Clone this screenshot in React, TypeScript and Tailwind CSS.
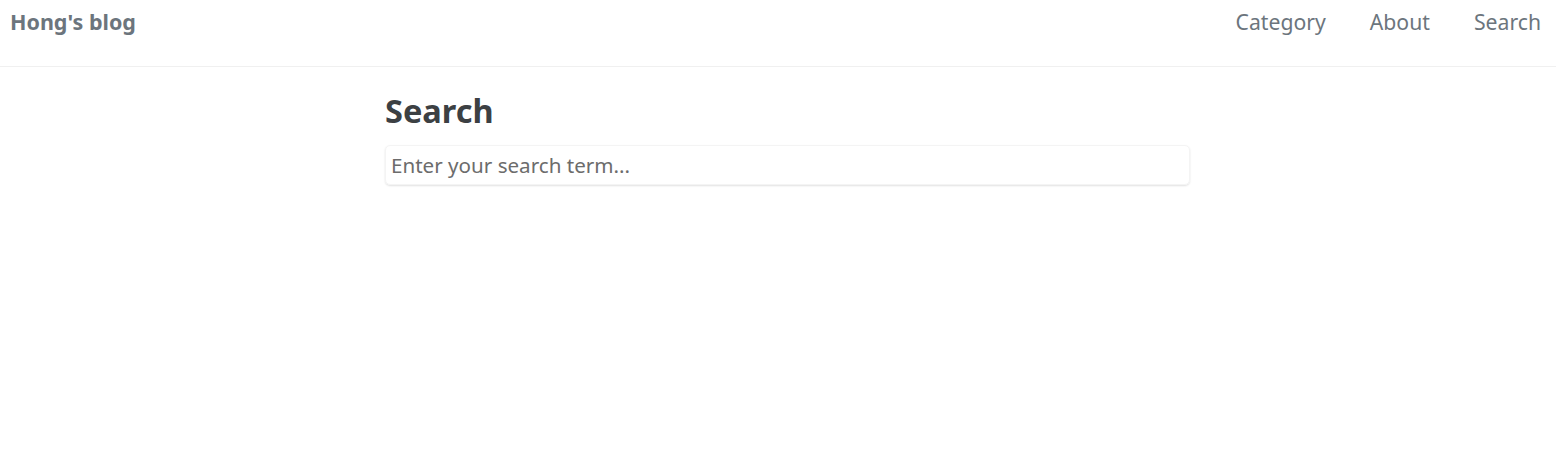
import React from 'react';

export default function App() {
  return (
    <div className="min-h-[467px] bg-white" style={{ fontFamily: '"Noto Sans", "Open Sans", sans-serif' }}>
      <header className="flex h-[67px] items-start justify-between border-b border-[#f0f0f0] pl-[10px] pr-[15px]">
        <a className="pt-[6px] text-[21.5px] font-bold leading-[32px] text-[#6c757d]">Hong's blog</a>
        <nav className="flex gap-[44px] pt-[6px] text-[21.2px] leading-[32px] text-[#6c757d]">
          <a>Category</a>
          <a>About</a>
          <a>Search</a>
        </nav>
      </header>
      <main className="ml-[385px] w-[805px] pt-[22px]">
        <h1 className="text-[32.5px] font-bold leading-[44px] text-[#3c4043]">Search</h1>
        <input
          type="text"
          placeholder="Enter your search term..."
          className="mt-[12px] h-[40px] w-full rounded-[5px] border border-[#f4f4f4] px-[5px] text-[20.6px] text-[#333] shadow-[0_1px_2px_rgba(0,0,0,0.12)] outline-none placeholder:text-[#6c6c6c]"
        />
      </main>
    </div>
  );
}
